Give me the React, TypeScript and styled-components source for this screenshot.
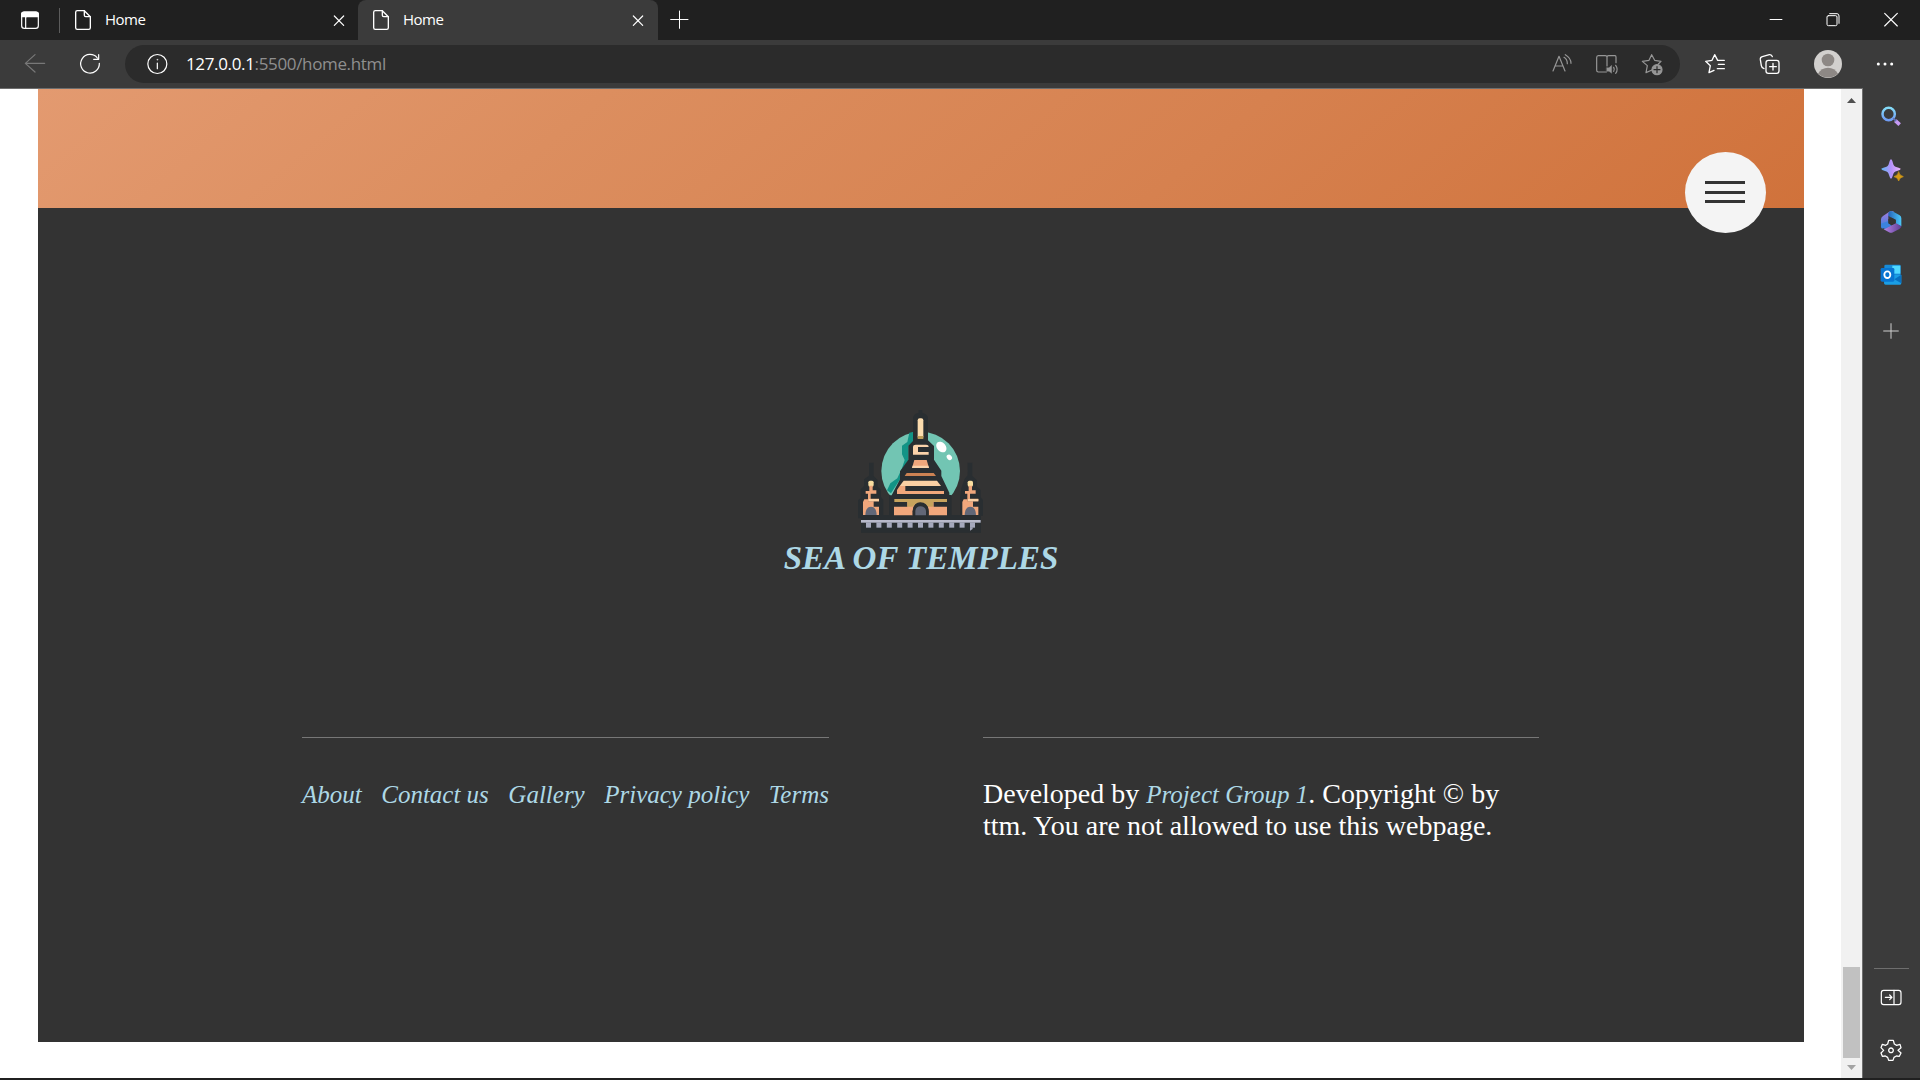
import React from 'react';
import styled, { createGlobalStyle } from 'styled-components';

const GlobalStyle = createGlobalStyle`
  * { box-sizing: border-box; }
  html, body { margin: 0; padding: 0; background: #202020; overflow: hidden; }
`;

const ui = `"Open Sans", "Noto Sans", sans-serif`;
const serif = `"Liberation Serif", "Times New Roman", serif`;

const Window = styled.div`
  width: 1920px;
  height: 1080px;
  display: flex;
  flex-direction: column;
  background: #202020;
  font-family: ${ui};
`;

const TabStrip = styled.div`
  height: 40px;
  display: flex;
  align-items: center;
  background: #202020;
`;

const TabMenu = styled.div`
  width: 60px;
  height: 25px;
  padding-left: 18px;
  display: flex;
  align-items: center;
  border-right: 1px solid #5c5c5c;
`;

const Tab = styled.div<{ $active?: boolean; $width: number }>`
  width: ${(p) => p.$width}px;
  height: 40px;
  padding: 0 ${(p) => (p.$active ? 8 : 7)}px 0 11px;
  display: flex;
  align-items: center;
  border-radius: 8px 8px 0 0;
  background: ${(p) => (p.$active ? '#3b3b3b' : 'transparent')};
`;

const TabTitle = styled.span`
  flex: 1;
  margin-left: 10px;
  padding-bottom: 2px;
  color: #fff;
  font-size: 15px;
  line-height: 20px;
  letter-spacing: -0.5px;
`;

const WindowControls = styled.div`
  margin-left: auto;
  display: flex;
  align-items: center;
  padding-right: 16px;
  gap: 33px;
`;

const Toolbar = styled.div`
  height: 48px;
  display: flex;
  align-items: center;
  background: #3b3b3b;
  padding-left: 23px;
`;

const NavButtons = styled.div`
  display: flex;
  width: 102px;
  gap: 31px;
`;

const AddressBar = styled.div`
  width: 1555px;
  height: 38px;
  padding: 0 16px 0 20px;
  display: flex;
  align-items: center;
  border-radius: 19px;
  background: #2b2b2b;
`;

const Url = styled.span`
  flex: 1;
  margin-left: 17px;
  color: #fff;
  font-size: 17px;
  line-height: 24px;
  letter-spacing: -0.35px;
`;

const UrlPath = styled.span`
  color: #8f8f8f;
`;

const AddressActions = styled.div`
  display: flex;
  gap: 21px;
`;

const ToolbarActions = styled.div`
  display: flex;
  align-items: center;
  padding-left: 23px;
`;

const Spacer = styled.div<{ $w: number }>`
  width: ${(p) => p.$w}px;
`;

const Main = styled.div`
  height: 990px;
  display: flex;
  background: #3b3b3b;
`;

const Viewport = styled.div`
  width: 1863px;
  display: flex;
  border-top: 1px solid #6e6e6e;
  border-right: 1px solid #6e6e6e;
  background: #fff;
`;

const Page = styled.div`
  position: relative;
  width: 1841px;
  padding: 0 37px 0 38px;
`;

const Banner = styled.div`
  height: 119px;
  background: linear-gradient(140deg, #e39a70 0%, #dc8e5f 30%, #d6814f 65%, #d0723b 100%);
`;

const MenuButton = styled.button`
  position: absolute;
  left: 1685px;
  top: 63px;
  width: 81px;
  height: 81px;
  padding: 0;
  border: 0;
  border-radius: 50%;
  background: #f4f4f4;
  display: flex;
  align-items: center;
  justify-content: center;
`;

const Footer = styled.footer`
  height: 834px;
  padding-top: 192px;
  display: flex;
  flex-direction: column;
  align-items: center;
  background: #333;
  font-family: ${serif};
`;

const SiteName = styled.h2`
  margin: 0;
  height: 36px;
  color: #add8e6;
  font-size: 33px;
  line-height: 36px;
  font-style: italic;
  font-weight: 700;
  white-space: nowrap;
`;

const Columns = styled.div`
  width: 1238px;
  margin-top: 161px;
  display: flex;
  gap: 154px;
`;

const LinkList = styled.nav`
  width: 527px;
  padding-top: 41px;
  display: flex;
  justify-content: space-between;
  border-top: 1px solid #777;
  line-height: 32px;
`;

const FooterLink = styled.a`
  color: #add8e6;
  font-size: 25px;
  font-style: italic;
  white-space: nowrap;
`;

const Copyright = styled.p`
  width: 556px;
  margin: 0;
  padding-top: 40px;
  border-top: 1px solid #777;
  color: #fff;
  font-size: 28px;
  line-height: 32px;
  white-space: nowrap;

  ${FooterLink} {
    line-height: 1;
  }
`;

const Scrollbar = styled.div`
  width: 21px;
  display: flex;
  flex-direction: column;
  align-items: center;
  background: #f1f1f1;
`;

const ScrollTrack = styled.div`
  flex: 1;
  display: flex;
  flex-direction: column;
  justify-content: flex-end;
`;

const ScrollThumb = styled.div`
  width: 17px;
  height: 91px;
  background: #c1c1c1;
`;

const Sidebar = styled.aside`
  width: 57px;
  padding: 1px 1px 4px 0;
  display: flex;
  flex-direction: column;
  align-items: center;
`;

const SidebarItem = styled.div<{ $h: number }>`
  height: ${(p) => p.$h}px;
  display: flex;
  align-items: center;
`;

const SidebarDivider = styled.div`
  width: 35px;
  height: 1px;
  margin: auto 0 0;
  background: #6e6e6e;
`;

const Svg = styled.svg`
  display: block;
  flex: none;
  overflow: visible;
`;

/* Icons are drawn on a grid of three units per pixel, centred on the origin. */
const Icon = ({ size = 24, color = '#fff', width = 3.6, children }: {
  size?: number; color?: string; width?: number; children: React.ReactNode;
}) => (
  <Svg width={size} height={size} viewBox={`${-size * 1.5} ${-size * 1.5} ${size * 3} ${size * 3}`}
    fill="none" stroke={color} strokeWidth={width} strokeLinecap="round" strokeLinejoin="round">
    {children}
  </Svg>
);

const FileIcon = () => (
  <Icon width={4}>
    <path d="M-16-28H4L22-10V23Q22 28 17 28H-17Q-22 28-22 23V-23Q-22-28-17-28Z" />
    <path d="M4-28V-14Q4-10 8-10H22" />
  </Icon>
);

const CloseIcon = () => (
  <Icon><path d="M-14-12L14 16M14-12L-14 16" /></Icon>
);

const Temple = () => (
  <Svg width="160" height="140" viewBox="3 0 480 420">
    <circle cx="242" cy="213" r="118" fill="#72c5b3" />
    <path d="M208 98L219 96V125L205 138V181L181 216V236L153 280L141 271L151 250L172 235L186 205L194 180L186 163V137L202 126Z" fill="#139486" />
    <ellipse cx="304" cy="141" rx="13" ry="18" fill="#fff" transform="rotate(-42 304 141)" />
    <ellipse cx="328" cy="172" rx="7" ry="9" fill="#fff" transform="rotate(-42 328 172)" />
    <path d="M236 30H247V38Q264 43 264 55V121L282 138V179L304 212V228L328 278V285H335V345H360V294L364 265L374 236L383 226V188H397V228L411 241V260L422 270V292L429 300V347H423V398H63V355H54V301L62 293V268L72 258V238L87 227V188H101V228L113 240V260L123 269V291L130 300V345H147V286H155L180 238V214L205 179V137L219 123V53Q221 41 236 38Z" fill="#292e31" />
    <rect x="233" y="55" width="17" height="62" rx="6" fill="#fbdcae" />
    <rect x="233" y="108" width="17" height="9" fill="#bc9c59" />
    <path d="M219 140Q219 134 227 134H258Q266 134 266 141H234V156H266V164H219Z" fill="#fad2aa" />
    <path d="M223 180H260L267 204H216Z" fill="#f0a77c" />
    <path d="M218 197H265L267 204H216Z" fill="#fad2aa" />
    <path d="M200 219H281L288 228H194Z" fill="#cc8253" />
    <path d="M191 242H291L303 258H179Z" fill="#fad0a4" />
    <path d="M179 258H196V273H312V282H171V270Z" fill="#f0a77c" />
    <rect x="163" y="297" width="158" height="9" fill="#c7a35d" />
    <path d="M202 306H281V320H321V346H266V334Q264 307 241 307Q221 307 218 334V346H162V320H202Z" fill="#f0a77c" />
    <path d="M202 306H279V320H264Q241 296 217 320H202Z" fill="#c7a35d" />
    <path d="M218 346V334Q221 307 241 307Q264 307 266 334V346Z" fill="#292e31" />
    <path d="M226 346V333Q228 319 241 319Q256 319 258 333V346Z" fill="#626777" />
    {[93, 391].map((x) => (
      <g key={x} transform={`translate(${x} 0)`}>
        <rect x="-8" y="242" width="16" height="18" rx="5" fill="#f8dda0" />
        <path d="M-5 257H5V271H16V281H-1V296H24V304H-9V281H-16V273H-5Z" fill="#f0a77c" />
        <path d="M-20 298H-8V304H8V320H24V345H-24V306Z" fill="#f0a77c" />
        <path d="M-17 345Q-16 320 0 320Q16 320 17 345Z" fill="#626777" />
        <path d="M-7 297H24V304H-7Z" fill="#fad0a4" />
      </g>
    ))}
    <rect x="63" y="360" width="359" height="8" fill="#b8bacb" />
    {Array.from({ length: 11 }, (_, i) => (
      <rect key={i} x={78 + i * 31.2} y="367" width="15" height="16" fill="#a5a9bd" />
    ))}
    <path d="M390 382H398V387L390 392Z" fill="#a5a9bd" />
  </Svg>
);

export default function App() {
  return (
    <Window>
      <GlobalStyle />
      <TabStrip>
        <TabMenu>
          <Icon>
            <rect x="-25" y="-24" width="50" height="49" rx="8" />
            <path d="M-25-10V-18Q-25-24-18-24H18Q25-24 25-18V-10Z" fill="#fff" />
            <path d="M-13-8V24" />
          </Icon>
        </TabMenu>
        <Tab $width={298}>
          <FileIcon />
          <TabTitle>Home</TabTitle>
          <CloseIcon />
        </Tab>
        <Tab $active $width={300}>
          <FileIcon />
          <TabTitle>Home</TabTitle>
          <CloseIcon />
        </Tab>
        <Spacer $w={9} />
        <Icon width={3}><path d="M-25-1.5H27M1.5-27V25" /></Icon>
        <WindowControls>
          <Icon width={3}><path d="M-19-1.5H19" strokeLinecap="butt" /></Icon>
          <Icon width={3}>
            <rect x="-18" y="-13" width="30" height="30" rx="4" />
            <path d="M-10-19H12Q18-19 18-12V10" />
          </Icon>
          <Icon size={26} width={3.5}><path d="M-19-20L19 18M19-20L-19 18" /></Icon>
        </WindowControls>
      </TabStrip>

      <Toolbar>
        <NavButtons>
          <Icon color="#787878"><path d="M29-2H-29M0-28L-29-2L0 24" /></Icon>
          <Icon><path d="M22-18A28 28 0 1 0 28-2M26-28V-14H11" /></Icon>
        </NavButtons>
        <AddressBar>
          <Icon>
            <circle r="28.5" cx="1" />
            <path d="M1-3V14" /><circle cx="1" cy="-13" r="1.5" fill="#fff" strokeWidth="1" />
          </Icon>
          <Url>127.0.0.1<UrlPath>:5500/home.html</UrlPath></Url>
          <AddressActions>
            <Icon color="#969696">
              <path d="M-27 21L-9-23L9 21M-20 6H2M6-20Q16-14 16-1M10-28Q27-18 27-2" />
            </Icon>
            <Icon color="#969696">
              <path d="M-2 24H-26Q-31 24-31 19V-19Q-31-25-26-25H-5Q0-25 0-20V6M0-20Q0-25 5-25H24Q27-25 27-21V-4M0-20V6" />
              <path d="M-1 11H6L14 4V28L6 22H-1Z" fill="#969696" strokeWidth="1" />
              <path d="M20 10Q24 16 20 22M26 4Q35 16 26 28" />
            </Icon>
            <Icon color="#969696">
              <path d="M0 18L-18 26L-14 5L-29-8L-9-11L-1-28L8-11L27-8L19 0" />
              <circle cx="15" cy="17" r="15" fill="#969696" />
              <path d="M6 17H24M15 8V26" stroke="#2b2b2b" />
            </Icon>
          </AddressActions>
        </AddressBar>
        <ToolbarActions>
          <Icon width={4}>
            <path d="M-3 19L-18 26L-14 5L-28-8L-9-11L-1-28L8-11H28M10 1H28M7 14H28" />
          </Icon>
          <Spacer $w={31} />
          <Icon width={4}>
            <rect x="-12" y="-11" width="39" height="39" rx="7" />
            <path d="M-1 8H19M9-2V18M-18 14Q-25 12-26 5L-29-13Q-30-20-23-22L-2-28Q5-29 7-22" />
          </Icon>
          <Spacer $w={32} />
          <Icon size={28}>
            <circle r="42" fill="#d2d0ce" stroke="none" />
            <circle cy="-12" r="19" fill="#8d8885" stroke="none" />
            <path d="M-30 29Q-20 11 0 11Q20 11 30 29Q0 52-30 29Z" fill="#8d8885" stroke="none" />
          </Icon>
          <Spacer $w={31} />
          <Icon>
            <g fill="#fff" stroke="none"><circle cx="-20" r="4.5" /><circle r="4.5" /><circle cx="20" r="4.5" /></g>
          </Icon>
        </ToolbarActions>
      </Toolbar>

      <Main>
        <Viewport>
          <Page>
            <Banner />
            <Footer>
              <Temple />
              <SiteName>SEA OF TEMPLES</SiteName>
              <Columns>
                <LinkList>
                  <FooterLink>About</FooterLink>
                  <FooterLink>Contact us</FooterLink>
                  <FooterLink>Gallery</FooterLink>
                  <FooterLink>Privacy policy</FooterLink>
                  <FooterLink>Terms</FooterLink>
                </LinkList>
                <Copyright>
                  Developed by <FooterLink>Project Group 1</FooterLink>. Copyright © by
                  <br />
                  ttm. You are not allowed to use this webpage.
                </Copyright>
              </Columns>
            </Footer>
            <MenuButton>
              <Svg width="41" height="23" viewBox="0 0 41 23" fill="#333">
                <path d="M0 0H40V3H0ZM0 10H40V13H0ZM0 19H40V22H0Z" />
              </Svg>
            </MenuButton>
          </Page>
          <Scrollbar>
            <Svg width="21" height="20" viewBox="0 0 21 20"><path d="M6 14L10.5 9L15 14Z" fill="#505050" /></Svg>
            <ScrollTrack><ScrollThumb /></ScrollTrack>
            <Svg width="21" height="20" viewBox="0 0 21 20"><path d="M6 7H15L10.5 12Z" fill="#a3a3a3" /></Svg>
          </Scrollbar>
        </Viewport>

        <Sidebar>
          <SidebarItem $h={54}>
            <Icon>
              <defs>
                <linearGradient id="lens" x1="0" y1="0" x2="0" y2="1"><stop stopColor="#84dcf8" /><stop offset="1" stopColor="#709cf4" /></linearGradient>
                <linearGradient id="spark" x1="0" y1="0.5" x2="1" y2="0.4"><stop stopColor="#62b8f4" /><stop offset="0.5" stopColor="#b491fa" /><stop offset="1" stopColor="#edb5fa" /></linearGradient>
                <linearGradient id="hexBlue"><stop stopColor="#2463b8" /><stop offset="1" stopColor="#4cc9fa" /></linearGradient>
                <linearGradient id="hexLeft" x1="0" y1="0" x2="0" y2="1"><stop stopColor="#a77bdc" /><stop offset="1" stopColor="#3780df" /></linearGradient>
                <linearGradient id="hexBase"><stop stopColor="#b785e8" /><stop offset="1" stopColor="#5e3e94" /></linearGradient>
              </defs>
              <circle cx="-7" cy="-6" r="18.5" stroke="url(#lens)" strokeWidth="7.5" />
              <path d="M13 14L26 26" stroke="#c69af4" strokeWidth="11" strokeLinecap="butt" />
              <path d="M8 8L14 14" stroke="#6274b8" strokeWidth="5" />
            </Icon>
          </SidebarItem>
          <SidebarItem $h={54}>
            <Icon>
              <path d="M0-32Q3-32 6-20Q8-10 18-8Q29-5 29-3Q29 0 18 3Q8 5 6 15Q3 26 0 26Q-3 26-6 15Q-8 5-18 3Q-29 0-29-3Q-29-5-18-8Q-8-10-6-20Q-3-32 0-32Z" fill="url(#spark)" stroke="none" />
              <path d="M23 6Q25 17 37 20Q25 22 23 33Q21 22 9 20Q21 17 23 6Z" fill="#d49a15" stroke="#d49a15" strokeWidth="2" />
            </Icon>
          </SidebarItem>
          <SidebarItem $h={50}>
            <Icon>
              <g stroke="none">
                <path d="M-24-18L-5-31Q2-35 10-30L-8-18V8L-27 20Q-30 17-30 12V-8Q-30-14-24-18Z" fill="url(#hexLeft)" />
                <path d="M-3-32Q1-35 7-31L26-20Q31-17 31-11V13L15 5V-7L-8-18V-28Z" fill="url(#hexBlue)" />
                <path d="M-17 18L5 8L15 4L31 13Q30 18 25 21L6 31Q0 34-6 31L-22 22Z" fill="url(#hexBase)" />
                <path d="M-30 5L-8-3V4L2 10L-17 20L-27 18Q-30 15-30 11Z" fill="#3b82df" />
                <path d="M-8-8L2-13L12-7V4L2 10L-8 4Z" fill="#343434" />
              </g>
            </Icon>
          </SidebarItem>
          <SidebarItem $h={56}>
            <Icon>
              <g stroke="none">
                <rect x="-20" y="-31" width="49" height="34" rx="4" fill="#178bd8" />
                <path d="M4-28H28V-4H4Z" fill="#50d9ff" />
                <path d="M-20 0H31V24Q31 29 27 29H-16Q-21 29-21 24Z" fill="#1a9ee5" />
                <path d="M31-1V25L10 13Z" fill="#0870c0" />
                <rect x="-31" y="-21" width="41" height="41" rx="4" fill="#0875d1" />
              </g>
              <ellipse cx="-11" cy="-1" rx="9" ry="10" strokeWidth="5.5" />
            </Icon>
          </SidebarItem>
          <SidebarItem $h={55}>
            <Icon color="#d0d0d0" width={3}><path d="M-22 0H22M0-22V22" /></Icon>
          </SidebarItem>
          <SidebarDivider />
          <SidebarItem $h={56}>
            <Icon width={3.6}>
              <rect x="-29" y="-20" width="59" height="43" rx="7" />
              <path d="M9-20V22M-17 1H3M-4-6L3 1L-4 8" />
            </Icon>
          </SidebarItem>
          <SidebarItem $h={49}>
            <Icon width={3.8}>
              <path d="M-7-29H7L10-18L17-14L27-17L30-7L21 1L30 9L25 19L16 18L9 22L6 31H-7L-10 22L-17 18L-26 19L-30 9L-22 1L-30-7L-26-17L-16-14L-10-18Z" />
              <circle cy="1" r="7" />
            </Icon>
          </SidebarItem>
        </Sidebar>
      </Main>
    </Window>
  );
}
